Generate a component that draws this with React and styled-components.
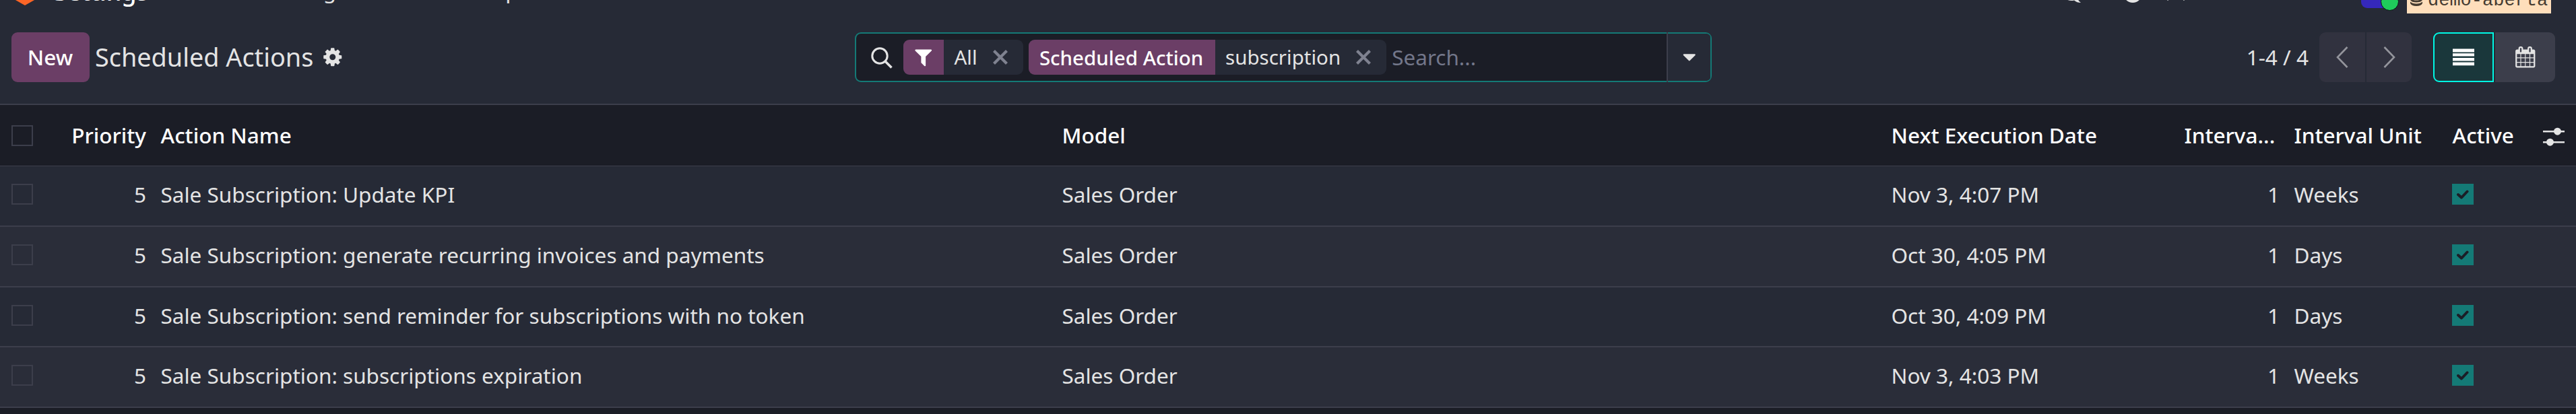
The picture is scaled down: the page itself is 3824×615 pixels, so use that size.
import React from "react";
import styled, { createGlobalStyle, css } from "styled-components";

const GlobalStyle = createGlobalStyle`
  *, *::before, *::after { box-sizing: border-box; }
  body {
    margin: 0;
    background: #1b1d26;
    color: #e4e4e4;
    font-family: "Noto Sans", sans-serif;
    font-size: 31.5px;
    line-height: 1.5;
    overflow: hidden;
  }
  svg { display: block; flex: none; }
`;

const Page = styled.div`
  width: 3824px;
  height: 615px;
  overflow: hidden;
  display: flex;
  flex-direction: column;
`;

/* ---------- top bar (scrolled almost out of view) ---------- */
const NavBar = styled.nav`
  height: 20px;
  flex: none;
  background: #262a36;
  display: flex;
  justify-content: space-between;
  align-items: flex-end;
  overflow: hidden;
  padding: 0 37px 0 22px;
`;
const NavGroup = styled.div`
  display: flex;
  align-items: flex-end;
  white-space: nowrap;
`;
const LogoIcon = styled.svg`
  margin-bottom: 12px;
`;
const AppName = styled.span`
  margin-left: 28px;
  color: #fff;
  font-size: 36px;
  font-weight: 500;
  line-height: 54px;
  margin-bottom: 5px;
`;
const MenuItem = styled.span`
  margin-left: ${(p) => p.$gap}px;
  line-height: 48px;
  margin-bottom: 10px;
`;
const TrayIcon = styled.svg`
  margin: 0 ${(p) => p.$gap}px 15px 0;
`;
const Avatar = styled.div`
  position: relative;
  width: 51px;
  height: 51px;
  margin: 0 17px 8px 0;
  border-radius: 9px;
  background: #3528bb;
`;
const Presence = styled.i`
  position: absolute;
  right: -5px;
  bottom: -4px;
  width: 27px;
  height: 27px;
  border-radius: 50%;
  border: 1.5px solid #0c0d12;
  background: #1fcb5b;
`;
const DbBadge = styled.div`
  width: 214px;
  height: 60px;
  padding: 0 0 1px 5px;
  display: flex;
  align-items: flex-end;
  background: #fedebb;
  color: #453b31;
  font: 27px/36px "Liberation Mono", monospace;
  svg { margin: 0 8px 10px 0; }
`;

/* ---------- control panel ---------- */
const ControlPanel = styled.header`
  height: 136px;
  flex: none;
  display: grid;
  grid-template-columns: 1269px 1272px 1fr;
  align-items: start;
  padding-top: 28px;
  background: #262a36;
  border-bottom: 2px solid #3c3e4b;
`;
const Crumbs = styled.div`
  display: flex;
  align-items: center;
  height: 74px;
  padding-left: 17px;
`;
const NewButton = styled.button`
  width: 116px;
  height: 74px;
  padding: 0 1px 0 0;
  border: 0;
  border-radius: 9px;
  background: #6b3e66;
  color: #fff;
  font: 500 31.5px/74px "Noto Sans", sans-serif;
`;
const Title = styled.h1`
  margin: 0 12.5px 0 8px;
  font-size: 37.8px;
  font-weight: 400;
  line-height: 74px;
  white-space: nowrap;
`;

const SearchBox = styled.div`
  display: flex;
  align-items: center;
  height: 74px;
  border-radius: 9px;
  border: 2px solid #147a76;
  background: #1b1d26;
  padding-left: 21px;
`;
const SearchIcon = styled.svg`
  margin-right: 16px;
`;
const Facet = styled.div`
  display: flex;
  align-items: center;
  height: 52px;
  margin-right: 8px;
  border-radius: 9px;
  overflow: hidden;
  background: #262a36;
  font-size: 29.5px;
  white-space: nowrap;
  line-height: 52px;
`;
const FacetLabel = styled.span`
  width: ${(p) => p.$width}px;
  height: 52px;
  display: flex;
  align-items: center;
  justify-content: center;
  background: #6b3e66;
  color: #fff;
  font-weight: 500;
`;
const FacetName = styled.span`
  margin: 2px 1px 0 0;
`;
const FacetValue = styled.span`
  margin: 0 23px 0 15.500px;
`;
const RemoveIcon = styled.svg`
  margin-right: 23px;
`;
const Placeholder = styled.span`
  flex: 1;
  color: #73778a;
  line-height: 70px;
`;
const SearchToggle = styled.div`
  width: 65px;
  height: 74px;
  border-left: 2px solid #3c3e4b;
  display: flex;
  align-items: center;
  justify-content: center;
  background: #262a36 content-box;
  border-radius: 0 7px 7px 0;
  padding: 2px 0;
`;

const PanelRight = styled.div`
  display: flex;
  align-items: center;
  justify-content: flex-end;
  height: 74px;
  padding-right: 31px;
`;
const Counter = styled.span`
  margin-right: 16px;
  line-height: 74px;
`;
const ButtonGroup = styled.div`
  display: flex;
  gap: 2px;
  margin-left: ${(p) => p.$gap || 0}px;
`;
const GroupButton = styled.button`
  width: ${(p) => p.$width}px;
  height: 74px;
  padding: 0;
  display: flex;
  align-items: center;
  justify-content: center;
  border: 0;
  color: ${(p) => (p.$muted ? "#94959c" : "#e4e4e4")};
  background: ${(p) => (p.$muted ? "#31323f" : "#3c3e4b")};
  &:first-child { border-radius: 9px 0 0 9px; }
  &:last-child { border-radius: 0 9px 9px 0; }
  ${(p) =>
    p.$active &&
    css`
      background: #1a373b;
      color: #fff;
      border: 2px solid #00f8e4;
    `}
`;

/* ---------- list ---------- */
const Row = styled.div`
  display: grid;
  grid-template-columns: 68px 159px 1338px 1231px 435px 163px 235px 134px 1fr;
  align-items: center;
  flex: none;
  height: ${(p) => p.$height || 90}px;
  border-bottom: 2px solid #3c3e4b;
  background: ${(p) => (p.$striped ? "#2a2d39" : "#262a36")};
`;
const HeaderRow = styled(Row)`
  height: 91px;
  border-bottom-width: 1px;
  background: #1b1d26;
  color: #fff;
  font-weight: 500;
`;
const Cell = styled.div`
  padding: 0 10px 0 11.5px;
  line-height: 48px;
  white-space: nowrap;
  text-align: ${(p) => (p.$right ? "right" : "left")};
`;
const HeadCell = styled(Cell)``;
const BodyCell = styled(Cell)`
  margin-bottom: 4px;
`;
const OptionsIcon = styled.svg`
  margin-top: 5px;
`;
const Check = styled.div`
  width: 32px;
  height: 31px;
  margin-left: ${(p) => (p.$on ? -1 : 17)}px;
  margin-bottom: ${(p) => (p.$head ? 0 : 5)}px;
  border: 2px solid ${(p) => (p.$on ? "#147a76" : "#3c3e4b")};
  background: ${(p) => (p.$on ? "#147a76" : "transparent")};
  display: flex;
  align-items: center;
  justify-content: center;
`;

const Glyph = ({ d, size = 31.5 }) => (
  <svg width={size} height={size} viewBox="0 0 1792 1792" fill="currentColor">
    <path d={d} />
  </svg>
);
const COG =
  "M1152 896q0-106-75-181t-181-75-181 75-75 181 75 181 181 75 181-75 75-181zm512-109v222q0 12-8 23t-20 13l-185 28q-19 54-39 91 35 50 107 138 10 12 10 25t-9 23q-27 37-99 108t-94 71q-12 0-26-9l-138-108q-44 23-91 38-16 136-29 186-7 28-36 28h-222q-14 0-24.500-8.500t-11.500-21.500l-28-184q-49-16-90-37l-141 107q-10 9-25 9-14 0-25-11-126-114-165-168-7-10-7-23 0-12 8-23 15-21 51-66.500t54-70.500q-27-50-41-99l-183-27q-13-2-21-12.500t-8-23.500v-222q0-12 8-23t19-13l186-28q14-46 39-92-40-57-107-138-10-12-10-24 0-10 9-23 26-36 98.500-107.500t94.500-71.500q13 0 26 10l138 107q44-23 91-38 16-136 29-186 7-28 36-28h222q14 0 24.500 8.500t11.500 21.500l28 184q49 16 90 37l142-107q9-9 24-9 13 0 25 10 129 119 165 170 7 8 7 22 0 12-8 23-15 21-51 66.500t-54 70.500q26 50 41 98l183 28q13 2 21 12.500t8 23.500z";
const FILTER =
  "M1595 295q17 41-14 70l-493 493v742q0 42-39 59-13 5-25 5-27 0-45-19l-256-256q-19-19-19-45v-486l-493-493q-31-29-14-70 17-39 59-39h1280q42 0 59 39z";
const CARET =
  "M1408 704q0 26-19 45l-448 448q-19 19-45 19t-45-19l-448-448q-19-19-19-45t19-45 45-19h896q26 0 45 19t19 45z";
const CALENDAR =
  "M192 1664h288v-288h-288v288zm352 0h320v-288h-320v288zm-352-352h288v-320h-288v320zm352 0h320v-320h-320v320zm-352-384h288v-288h-288v288zm736 736h320v-288h-320v288zm-384-736h320v-288h-320v288zm768 736h288v-288h-288v288zm-384-352h320v-320h-320v320zm-352-864v-288q0-13-9.500-22.500t-22.500-9.500h-64q-13 0-22.500 9.500t-9.500 22.500v288q0 13 9.500 22.500t22.500 9.500h64q13 0 22.500-9.500t9.500-22.500zm736 864h288v-320h-288v320zm-384-384h320v-288h-320v288zm384 0h288v-288h-288v288zm32-480v-288q0-13-9.500-22.500t-22.500-9.500h-64q-13 0-22.500 9.500t-9.500 22.500v288q0 13 9.500 22.500t22.500 9.500h64q13 0 22.500-9.500t9.500-22.500zm384-64v1280q0 52-38 90t-90 38h-1408q-52 0-90-38t-38-90v-1280q0-52 38-90t90-38h128v-96q0-66 47-113t113-47h64q66 0 113 47t47 113v96h384v-96q0-66 47-113t113-47h64q66 0 113 47t47 113v96h128q52 0 90 38t38 90z";

const Remove = () => (
  <RemoveIcon width="22" height="22" viewBox="0 0 22 22" stroke="#7f8290" strokeWidth="4.2">
    <path d="M1.5 1.500L20.500 20.500M20.500 1.500L1.500 20.500" />
  </RemoveIcon>
);

const ROWS = [
  ["Sale Subscription: Update KPI", "Nov 3, 4:07 PM", "Weeks", 90],
  ["Sale Subscription: generate recurring invoices and payments", "Oct 30, 4:05 PM", "Days", 90],
  ["Sale Subscription: send reminder for subscriptions with no token", "Oct 30, 4:09 PM", "Days", 89],
  ["Sale Subscription: subscriptions expiration", "Nov 3, 4:03 PM", "Weeks", 90],
];

export default function App() {
  return (
    <Page>
      <GlobalStyle />
      <NavBar>
        <NavGroup>
          <LogoIcon width="30" height="34" viewBox="0 0 30 34">
            <path d="M15 0L30 8.500V25.500L15 34L0 25.500V8.500Z" fill="#fb6526" />
          </LogoIcon>
          <AppName>Settings</AppName>
          <MenuItem $gap={50}>General Settings</MenuItem>
          <MenuItem $gap={44}>Users &amp; Companies</MenuItem>
        </NavGroup>
        <NavGroup>
          <TrayIcon $gap={64} width="34" height="30" viewBox="0 0 34 30">
            <path d="M18 4Q34 6 32 16Q30 22 29 23Q31 27 34 29Q28 29 24 25.500Q18 27 12 24Q24 23 27 14Z" fill="#e4e4e4" />
          </TrayIcon>
          <TrayIcon $gap={36} width="26" height="30" viewBox="0 0 26 30">
            <circle cx="13" cy="15" r="14" fill="#e4e4e4" />
          </TrayIcon>
          <TrayIcon $gap={260} width="30" height="30" viewBox="0 0 30 30">
            <path d="M2 25L26 3M4 3L28 25" stroke="#e4e4e4" strokeWidth="3" />
          </TrayIcon>
          <Avatar>
            <Presence />
          </Avatar>
          <DbBadge>
            <svg width="18" height="24" viewBox="0 0 18 24" fill="#453b31">
              <ellipse cx="9" cy="4" rx="9" ry="4" />
              <path d="M0 7Q3 10 9 10T18 7V10Q16 14 9 14T0 10ZM0 12.500Q3 15.500 9 15.500T18 12.500V15Q16 18.500 9 18.500T0 15ZM0 17.500Q3 20.500 9 20.500T18 17.500V20Q16 24 9 24T0 20Z" />
            </svg>
            demo-aberta
          </DbBadge>
        </NavGroup>
      </NavBar>

      <ControlPanel>
        <Crumbs>
          <NewButton>New</NewButton>
          <Title>Scheduled Actions</Title>
          <Glyph d={COG} />
        </Crumbs>
        <SearchBox>
          <SearchIcon width="33" height="33" viewBox="0 0 33 33" fill="none" stroke="#e4e4e4">
            <circle cx="14" cy="14" r="11.200" strokeWidth="3" />
            <path d="M22 22L31.500 31.500" strokeWidth="3.600" />
          </SearchIcon>
          <Facet>
            <FacetLabel $width={60}>
              <Glyph d={FILTER} />
            </FacetLabel>
            <FacetValue>All</FacetValue>
            <Remove />
          </Facet>
          <Facet>
            <FacetLabel $width={277}>
              <FacetName>Scheduled Action</FacetName>
            </FacetLabel>
            <FacetValue>subscription</FacetValue>
            <Remove />
          </Facet>
          <Placeholder>Search...</Placeholder>
          <SearchToggle>
            <Glyph d={CARET} />
          </SearchToggle>
        </SearchBox>
        <PanelRight>
          <Counter>1-4 / 4</Counter>
          <ButtonGroup>
            <GroupButton $width={68} $muted>
              <svg width="18" height="32" viewBox="0 0 18 32" fill="none" stroke="currentColor" strokeWidth="2.600">
                <path d="M16.500 1L2 16L16.500 31" />
              </svg>
            </GroupButton>
            <GroupButton $width={67} $muted>
              <svg width="18" height="32" viewBox="0 0 18 32" fill="none" stroke="currentColor" strokeWidth="2.600">
                <path d="M1.500 1L16 16L1.500 31" />
              </svg>
            </GroupButton>
          </ButtonGroup>
          <ButtonGroup $gap={32}>
            <GroupButton $width={90} $active>
              <svg width="32" height="26" viewBox="0 0 32 26" fill="currentColor">
                <path d="M0 .4H32V5.400H0ZM0 7.200H32V11.400H0ZM0 14H32V18.400H0ZM0 20.600H32V25.200H0Z" />
              </svg>
            </GroupButton>
            <GroupButton $width={89}>
              <Glyph d={CALENDAR} />
            </GroupButton>
          </ButtonGroup>
        </PanelRight>
      </ControlPanel>

      <HeaderRow>
        <Check $head />
        <HeadCell $right>Priority</HeadCell>
        <HeadCell>Action Name</HeadCell>
        <HeadCell>Model</HeadCell>
        <HeadCell>Next Execution Date</HeadCell>
        <HeadCell>Interva...</HeadCell>
        <HeadCell>Interval Unit</HeadCell>
        <HeadCell>Active</HeadCell>
        <HeadCell>
          <OptionsIcon width="32" height="30" viewBox="0 0 32 30" fill="#e4e4e4">
            <path d="M0 5H32V7.500H0ZM0 21H32V23.500H0Z" />
            <circle cx="21.500" cy="6.200" r="5.500" />
            <circle cx="10.500" cy="22.200" r="5.500" />
          </OptionsIcon>
        </HeadCell>
      </HeaderRow>

      {ROWS.map(([name, date, unit, height], i) => (
        <Row key={name} $height={height} $striped={i % 2 === 1}>
          <Check />
          <BodyCell $right>5</BodyCell>
          <BodyCell>{name}</BodyCell>
          <BodyCell>Sales Order</BodyCell>
          <BodyCell>{date}</BodyCell>
          <BodyCell $right>1</BodyCell>
          <BodyCell>{unit}</BodyCell>
          <Cell>
            <Check $on>
              <svg width="18" height="14" viewBox="0 0 18 14" fill="none" stroke="#1b1d26" strokeWidth="4" strokeLinecap="round" strokeLinejoin="round">
                <path d="M2 7L7 11.500L15.500 2.500" />
              </svg>
            </Check>
          </Cell>
        </Row>
      ))}
    </Page>
  );
}
